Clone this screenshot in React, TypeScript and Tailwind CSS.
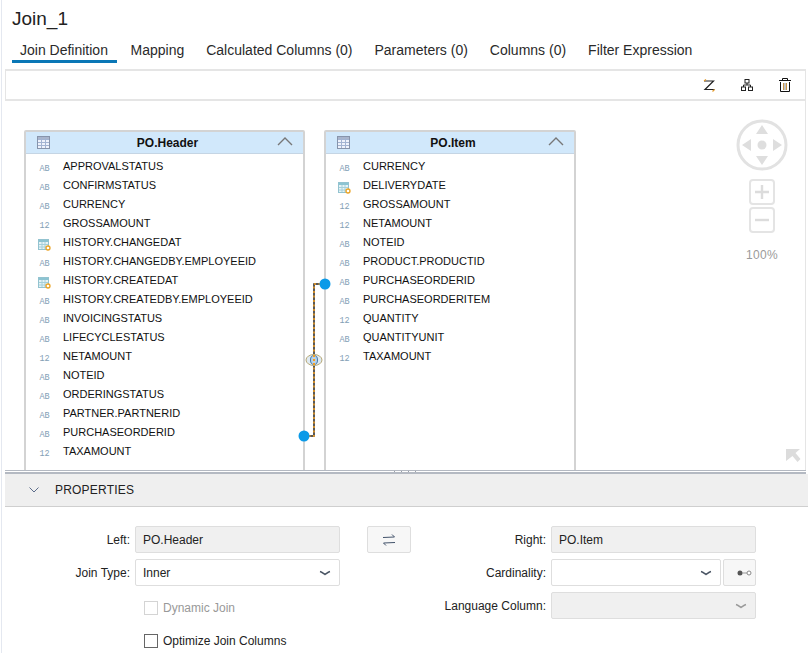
import React from "react";

const headerCols: [string, string][] = [
  ["ab", "APPROVALSTATUS"], ["ab", "CONFIRMSTATUS"], ["ab", "CURRENCY"], ["num", "GROSSAMOUNT"],
  ["date", "HISTORY.CHANGEDAT"], ["ab", "HISTORY.CHANGEDBY.EMPLOYEEID"], ["date", "HISTORY.CREATEDAT"],
  ["ab", "HISTORY.CREATEDBY.EMPLOYEEID"], ["ab", "INVOICINGSTATUS"], ["ab", "LIFECYCLESTATUS"],
  ["num", "NETAMOUNT"], ["ab", "NOTEID"], ["ab", "ORDERINGSTATUS"], ["ab", "PARTNER.PARTNERID"],
  ["ab", "PURCHASEORDERID"], ["num", "TAXAMOUNT"],
];

const itemCols: [string, string][] = [
  ["ab", "CURRENCY"], ["date", "DELIVERYDATE"], ["num", "GROSSAMOUNT"], ["num", "NETAMOUNT"],
  ["ab", "NOTEID"], ["ab", "PRODUCT.PRODUCTID"], ["ab", "PURCHASEORDERID"], ["ab", "PURCHASEORDERITEM"],
  ["num", "QUANTITY"], ["ab", "QUANTITYUNIT"], ["num", "TAXAMOUNT"],
];

const tabs = ["Join Definition", "Mapping", "Calculated Columns (0)", "Parameters (0)", "Columns (0)", "Filter Expression"];

function TableIcon() {
  return (
    <svg width="13" height="13" viewBox="0 0 13 13" className="shrink-0">
      <rect x="0.5" y="0.5" width="12" height="12" fill="#eef2fb" stroke="#8794ab" />
      <rect x="1" y="1" width="11" height="2" fill="#aab5cb" />
      <path d="M4.500 1v11M8.500 1v11M1 3.500h11M1 6.500h11M1 9.500h11" stroke="#a3b4d2" strokeWidth="1" fill="none" />
    </svg>
  );
}

function TypeIcon({ type }: { type: string }) {
  if (type === "date") {
    return (
      <svg width="13" height="13" viewBox="0 0 13 13" className="shrink-0 translate-y-[2px]">
        <rect x="0.5" y="1.5" width="10" height="10" fill="#e6f3f6" stroke="#93c3d0" />
        <rect x="1" y="2" width="9" height="2" fill="#8cc4d2" />
        <path d="M4 4v7M7 4v7M1 6.500h9M1 9h9" stroke="#a5d0da" fill="none" />
        <circle cx="10" cy="10" r="2" fill="#fff" stroke="#eba324" strokeWidth="1.300" />
      </svg>
    );
  }
  return (
    <span className="w-[13px] shrink-0 translate-y-[3px] text-center font-['Liberation_Mono',monospace] text-[8.5px] leading-[13px] text-[#83a0b6]">
      {type === "ab" ? "AB" : "12"}
    </span>
  );
}

function JoinTable({ title, cols, className }: { title: string; cols: [string, string][]; className: string }) {
  return (
    <div className={`absolute top-[130px] h-[345px] overflow-hidden rounded-t-[2px] border-2 border-[#d3d3d3] bg-white ${className}`}>
      <div className="flex h-[22px] items-center border-b border-[#c5d5e4] bg-[#d1e8fb] pl-[11px] pr-[10px]">
        <TableIcon />
        <div className="flex-1 pl-[8px] text-center text-[12px] font-bold text-[#111]">{title}</div>
        <svg width="16" height="9" viewBox="0 0 16 9" className="-translate-y-[1px]">
          <path d="M1 8l7-7 7 7" fill="none" stroke="#777" strokeWidth="1.400" />
        </svg>
      </div>
      <div className="pt-[3px]">
        {cols.map(([type, name]) => (
          <div key={name} className="flex h-[19px] items-center pl-[12px]">
            <TypeIcon type={type} />
            <span className="ml-[12px] text-[11px] text-[#111]">{name}</span>
          </div>
        ))}
      </div>
    </div>
  );
}

function Connector() {
  return (
    <svg width="40" height="170" viewBox="0 0 40 170" className="absolute left-[295px] top-[275px]">
      <path d="M30 9H19V161H9" fill="none" stroke="#222" strokeWidth="1.500" />
      <path d="M30 9H19V161H9" fill="none" stroke="#f59f1f" strokeWidth="1.500" strokeDasharray="2 2.500" />
      <circle cx="30" cy="9" r="5.500" fill="#0a9ae8" />
      <circle cx="9" cy="161" r="5.500" fill="#0a9ae8" />
      <ellipse cx="19" cy="85" rx="8" ry="5.500" fill="#dfeaf2" stroke="#b8a875" />
      <ellipse cx="19" cy="85" rx="3.500" ry="4.500" fill="#b9d2e8" stroke="#3f78ad" />
      <path d="M19 80v10" stroke="#f59f1f" strokeWidth="2" strokeDasharray="2 2" />
    </svg>
  );
}

function Navigator() {
  return (
    <div className="absolute left-[736px] top-[119px] flex w-[52px] flex-col items-center">
      <svg width="52" height="52" viewBox="0 0 52 52">
        <circle cx="26" cy="26" r="24" fill="#fff" stroke="#e2e2e2" strokeWidth="3" />
        <path d="M26 6l6 9H20zM26 46l-6-9h12zM6 26l9-6v12zM46 26l-9 6V20z" fill="#dedede" />
        <circle cx="26" cy="26" r="4.500" fill="#dedede" />
      </svg>
      <div className="mt-[8px] flex h-[26px] w-[26px] items-center justify-center rounded-[4px] border-2 border-[#e4e4e4]">
        <svg width="16" height="16" viewBox="0 0 16 16"><path d="M8 1v14M1 8h14" stroke="#dcdcdc" strokeWidth="2.400" /></svg>
      </div>
      <div className="mt-[2px] flex h-[26px] w-[26px] items-center justify-center rounded-[4px] border-2 border-[#e4e4e4]">
        <svg width="16" height="16" viewBox="0 0 16 16"><path d="M1 8h14" stroke="#dcdcdc" strokeWidth="2.400" /></svg>
      </div>
      <div className="mt-[13px] text-[12px] tracking-[0.3px] text-[#9a9a9a]">100%</div>
    </div>
  );
}

function Chevron({ color = "#4a5564" }: { color?: string }) {
  return (
    <svg width="12" height="6" viewBox="0 0 12 6">
      <path d="M1 1.500c2 .5 3.500 2 5 3 1.500-1 3-2.500 5-3" fill="none" stroke={color} strokeWidth="1.500" />
    </svg>
  );
}

function Label({ text }: { text: string }) {
  return <div className="self-center pr-[5px] text-right text-[12px] text-[#222]">{text}</div>;
}

function ReadOnly({ value }: { value: string }) {
  return (
    <div className="flex h-[27px] items-center rounded-[2px] border border-[#dedede] bg-[#f0f0f0] pl-[7px] text-[12px] text-[#222]">
      {value}
    </div>
  );
}

function Select({ value, muted }: { value?: string; muted?: boolean }) {
  return (
    <div className={`flex h-[27px] flex-1 items-center justify-between rounded-[2px] border border-[#dedede] pl-[7px] pr-[8px] text-[12px] text-[#222] ${muted ? "bg-[#f0f0f0]" : "bg-white"}`}>
      <span>{value}</span>
      <Chevron color={muted ? "#9a9a9a" : "#4a5564"} />
    </div>
  );
}

function Check({ label, disabled }: { label: string; disabled?: boolean }) {
  return (
    <div className="flex h-[14px] items-center">
      <div className={`h-[14px] w-[14px] border bg-white ${disabled ? "border-[#d4d4d4]" : "border-[#666]"}`} />
      <span className={`ml-[5px] text-[12px] ${disabled ? "text-[#999]" : "text-[#222]"}`}>{label}</span>
    </div>
  );
}

export default function App() {
  return (
    <div className="relative h-[653px] w-[808px] overflow-hidden bg-white font-['Liberation_Sans',Arial,sans-serif]">
      <div className="absolute bottom-0 left-[1px] top-0 w-[1px] bg-[#e4e8f0]" />

      {/* Title and tabs */}
      <div className="pl-[12px] pt-[7px] text-[19px] leading-[24px] text-[#222]">Join_1</div>
      <div className="ml-[12px] mt-[4px] flex h-[35px] gap-[6px] pt-[2px]">
        {tabs.map((t, i) => (
          <div key={t} className={`h-[26px] px-[8px] pt-[4px] text-[14px] leading-[18px] text-[#2a2a2a] ${i === 0 ? "min-w-[104.500px] border-b-[3px] border-[#0a77b6]" : ""}`}>
            {t}
          </div>
        ))}
      </div>

      {/* Toolbar */}
      <div className="-mt-[1px] ml-[5px] mr-[2px] flex h-[32px] items-center justify-end gap-[26px] border-x border-y-2 border-[#e5e5e5] pr-[14px]">
        <svg width="12" height="13" viewBox="0 0 12 13">
          <path d="M1 2h9.500L2 10.500h9.500" fill="none" stroke="#222" strokeWidth="1.200" />
          <path d="M1 2l2-1.500M11.500 10.500l-2 2" stroke="#e39a2d" strokeWidth="1.200" />
        </svg>
        <svg width="12" height="12" viewBox="0 0 12 12" fill="none" stroke="#222">
          <rect x="4" y="0.500" width="4" height="3.500" />
          <rect x="0.500" y="8" width="4" height="3.500" />
          <rect x="7.500" y="8" width="4" height="3.500" />
          <path d="M6 4v2M2.500 8V6h7v2" />
        </svg>
        <svg width="12" height="14" viewBox="0 0 12 14" fill="none">
          <path d="M0 2.500h12M3.500 2.500V0.500h5v2" stroke="#111" />
          <path d="M1.500 4v9.500h9V4" stroke="#111" />
          <path d="M4.500 5v7M7.500 5v7" stroke="#c99445" />
          <path d="M6 5v7" stroke="#888" />
        </svg>
      </div>

      {/* Canvas */}
      <div className="mr-[2px] h-[369px] border-r border-[#e5e5e5]" />
      <JoinTable title="PO.Header" cols={headerCols} className="left-[24px] w-[281px]" />
      <JoinTable title="PO.Item" cols={itemCols} className="left-[324px] w-[252px]" />
      <Connector />
      <Navigator />
      <svg width="16" height="15" viewBox="0 0 16 15" className="absolute left-[785px] top-[448px]">
        <path d="M1 1h14l-4.500 4 5 6-3 3-5-6L1 13z" fill="#dcdcdc" />
      </svg>

      {/* Splitter */}
      <div className="relative z-10 ml-[5px] mr-[2px] h-[4px] border-t border-b-2 border-[#b4b9c2] bg-white">
        <div className="absolute left-[389px] top-[0px] h-[1px] w-[26px] bg-[repeating-linear-gradient(90deg,#9aa0aa_0,#9aa0aa_1px,transparent_1px,transparent_7px)]" />
      </div>

      {/* Properties */}
      <div className="relative z-10 ml-[5px] h-[180px] bg-white">
        <div className="flex h-[33px] items-center border-b border-[#cfcfcf] bg-[#efefef] pl-[24px] text-[12px] tracking-[0.2px] text-[#222]">
          <svg width="10" height="6" viewBox="0 0 10 6">
            <path d="M0.500 0.500L5 5l4.500-4.500" fill="none" stroke="#5c6c8a" />
          </svg>
          <span className="ml-[16px]">PROPERTIES</span>
        </div>

        <div className="grid grid-cols-[130px_205px_27px_44px_140px_205px] gap-y-[6px] pt-[19px]">
          <Label text="Left:" />
          <ReadOnly value="PO.Header" />
          <div />
          <div className="flex h-[27px] items-center justify-center rounded-[2px] border border-[#dedede] bg-[#f7f7f7]">
            <svg width="14" height="12" viewBox="0 0 14 12" fill="none" stroke="#43536b">
              <path d="M1 3.500l11.500-.5L10 0.500M13 8.500l-11.500.5L4 11.500" />
            </svg>
          </div>
          <Label text="Right:" />
          <ReadOnly value="PO.Item" />

          <Label text="Join Type:" />
          <div className="flex"><Select value="Inner" /></div>
          <div className="col-span-2" />
          <Label text="Cardinality:" />
          <div className="flex gap-[2px]">
            <Select />
            <div className="flex h-[27px] w-[33px] items-center justify-end rounded-[2px] border border-[#dedede] bg-[#f7f7f7] pr-[3px]">
              <svg width="15" height="6" viewBox="0 0 15 6">
                <circle cx="3" cy="3" r="2.500" fill="#555" />
                <path d="M5 3h5" stroke="#999" />
                <circle cx="12" cy="3" r="2" fill="#fff" stroke="#888" />
              </svg>
            </div>
          </div>

          <div />
          <div className="pl-[9px] pt-[9px]"><Check label="Dynamic Join" disabled /></div>
          <div className="col-span-2" />
          <Label text="Language Column:" />
          <div className="flex"><Select muted /></div>
        </div>

        <div className="ml-[139px] mt-[15px]"><Check label="Optimize Join Columns" /></div>
      </div>
    </div>
  );
}
